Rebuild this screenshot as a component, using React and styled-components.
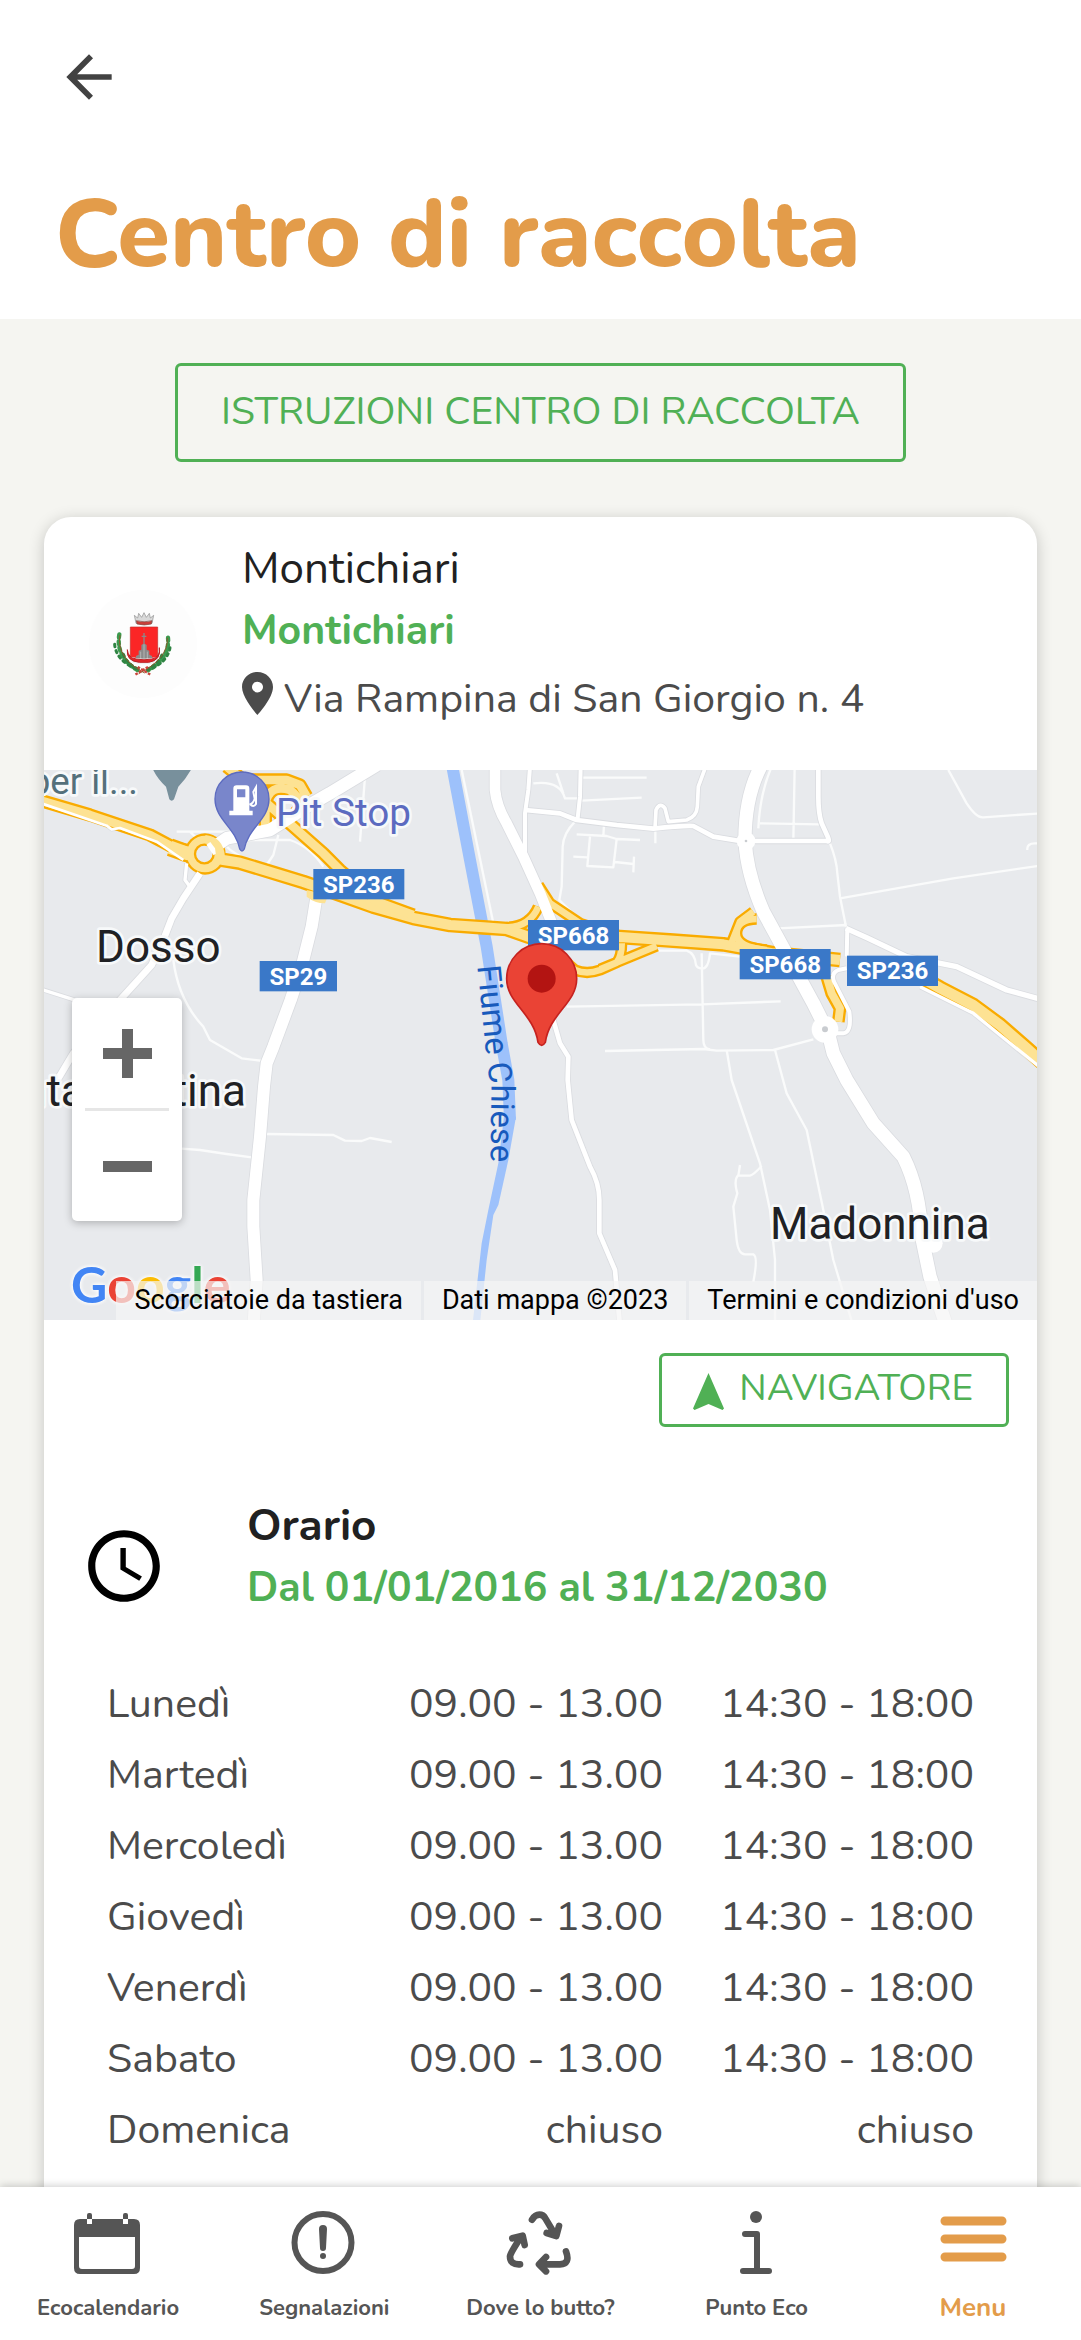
import React from "react";
import styled, { createGlobalStyle } from "styled-components";

const GREEN = "#50b055";
const ORANGE = "#e39c4a";
const GREY = "#4b4b4b";

const GlobalStyle = createGlobalStyle`
  *, *::before, *::after { box-sizing: border-box; }
  body {
    margin: 0;
    background: #f5f5f1;
    font-family: Nunito, Lato, "Open Sans", sans-serif;
    color: ${GREY};
  }
  button { font-family: inherit; margin: 0; cursor: pointer; }
  svg { display: block; flex: none; }
`;

const Screen = styled.div`
  display: flex;
  flex-direction: column;
  height: 100vh;
`;

const Header = styled.header`
  flex: none;
  padding: 43px 55px 24px;
  background: #fff;
`;

const BackButton = styled.button`
  display: block;
  padding: 0;
  border: 0;
  background: none;
  color: #424242;
`;

const Title = styled.h1`
  margin: 64px 0 0;
  font-size: 96px;
  line-height: 120px;
  font-weight: 800;
  color: ${ORANGE};
`;

const Content = styled.main`
  flex: 1;
  min-height: 0;
  overflow-y: auto;
  scrollbar-width: none;
  padding: 44px 44px 0;
`;

const OutlineButton = styled.button`
  display: flex;
  align-items: center;
  justify-content: center;
  gap: 15px;
  height: ${(p) => (p.$compact ? 74 : 99)}px;
  padding: ${(p) => (p.$compact ? "0 33px 4px 31px" : "0 43px 3px")};
  border: 3px solid ${GREEN};
  border-radius: 6px;
  background: transparent;
  color: ${GREEN};
  font-size: ${(p) => (p.$compact ? 37 : 39)}px;
  text-transform: uppercase;

  svg { margin-top: 6px; }
`;

const Centered = styled.div`
  display: flex;
  justify-content: center;
  margin-bottom: 55px;
`;

const Card = styled.section`
  padding-bottom: 60px;
  border-radius: 27px 27px 0 0;
  background: #fff;
  box-shadow: 0 3px 16px rgba(0, 0, 0, 0.2);
`;

const CardHead = styled.div`
  display: flex;
  align-items: center;
  gap: 45px;
  padding-left: 45px;
`;

const Avatar = styled.span`
  width: 108px;
  height: 108px;
  border-radius: 50%;
  background: #fdfdfd;
  overflow: hidden;
`;

const HeadText = styled.div`
  padding: 21px 0 34px;
`;

const Name = styled.p`
  margin: 0;
  font-size: 44px;
  line-height: 62px;
  font-weight: ${(p) => (p.$bold ? 700 : 400)};
  color: #212121;
`;

const Detail = styled.p`
  margin: 0;
  font-size: 41px;
  line-height: 62px;
  font-weight: 700;
  color: ${GREEN};
`;

const Address = styled.address`
  display: flex;
  align-items: center;
  gap: 11px;
  font-size: 41px;
  line-height: 74px;
  font-style: normal;

  svg { margin-bottom: 11px; }
`;

const MapBox = styled.div`
  position: relative;
  height: 550px;
  overflow: hidden;
  background: #e8eaed;
  font-family: Roboto, sans-serif;
`;

const MapLabel = styled.text`
  font-family: Roboto, sans-serif;
  font-size: ${(p) => p.$size}px;
  fill: ${(p) => p.$color};
  stroke: #f7f9fa;
  stroke-width: 16px;
  stroke-linejoin: round;
  paint-order: stroke;
`;

const ShieldLabel = styled.text`
  font-family: Roboto, sans-serif;
  font-size: 72px;
  font-weight: 700;
  fill: #fff;
  text-anchor: middle;
`;

const RiverLabel = styled.text`
  font-family: Roboto, sans-serif;
  font-size: 98px;
  fill: #185abc;
`;

const ZoomControl = styled.div`
  position: absolute;
  left: 28px;
  top: 228px;
  width: 110px;
  padding: 0 13px;
  border-radius: 5px;
  background: #fff;
  box-shadow: 0 2px 8px rgba(0, 0, 0, 0.25);
`;

const ZoomButton = styled.button`
  display: flex;
  align-items: center;
  justify-content: center;
  width: 100%;
  height: 110px;
  padding: 0;
  border: 0;
  background: none;
  color: #666;

  & + & { height: 113px; border-top: 3px solid #e6e6e6; }
`;

const GoogleLogo = styled.a`
  position: absolute;
  left: 27px;
  bottom: 6px;
  display: flex;
  font-family: Lato, sans-serif;
  font-size: 50px;
  line-height: 60px;
  font-weight: 700;
  text-decoration: none;
  text-shadow: 0 0 4px #fff, 0 0 4px #fff;
`;

const LogoLetter = styled.span`
  color: ${(p) => p.$color};
`;

const Attribution = styled.div`
  position: absolute;
  right: 0;
  bottom: 0;
  display: flex;
  gap: 3px;
`;

const attributionItem = `
  height: 39px;
  padding: 0 18px;
  border: 0;
  background: rgba(245, 245, 245, 0.7);
  color: #000;
  font-family: Roboto, sans-serif;
  font-size: 27px;
  line-height: 39px;
  text-decoration: none;
  white-space: nowrap;
`;
const AttributionButton = styled.button`${attributionItem}`;
const AttributionText = styled.span`${attributionItem}`;
const AttributionLink = styled.a`${attributionItem}`;

const Actions = styled.div`
  display: flex;
  justify-content: flex-end;
  padding: 33px 28px 0;
`;

const HoursHead = styled.div`
  display: flex;
  align-items: center;
  gap: 80px;
  padding: 68px 0 0 37px;
  color: #000;
`;

const HoursText = styled.div`
  padding-bottom: 17px;
`;

const HoursTable = styled.table`
  width: calc(100% - 126px);
  margin: 32px 63px 0;
  border-collapse: collapse;
  font-size: 41px;
  line-height: 71px;
`;

const Day = styled.th`
  padding: 0;
  font-weight: 400;
  text-align: left;
`;

const Slot = styled.td`
  width: ${(p) => (p.$last ? "311px" : "auto")};
  padding: 0;
  text-align: right;
`;

const TabBar = styled.nav`
  position: relative;
  flex: none;
  display: grid;
  grid-template-columns: repeat(5, 1fr);
  height: 153px;
  padding-top: 24px;
  background: #fff;
  box-shadow: 0 -1px 8px rgba(0, 0, 0, 0.2);
`;

const Tab = styled.a`
  display: flex;
  flex-direction: column;
  align-items: center;
  gap: 20px;
  color: ${(p) => (p.$active ? ORANGE : "#555")};
  font-size: ${(p) => (p.$active ? 26 : 22)}px;
  line-height: 26px;
  font-weight: 700;
  text-decoration: none;
  white-space: nowrap;
`;

const BackIcon = () => (
  <svg width="68" height="68" viewBox="0 0 24 24" fill="currentColor" aria-hidden="true">
    <path d="M20 11H7.83l5.59-5.59L12 4l-8 8 8 8 1.41-1.41L7.83 13H20v-2z" />
  </svg>
);

const PinIcon = () => (
  <svg width="31" height="43" viewBox="5 2 14 20" preserveAspectRatio="none" fill={GREY} aria-hidden="true">
    <path d="M12 2C8.13 2 5 5.13 5 9c0 5.25 7 13 7 13s7-7.75 7-13c0-3.87-3.13-7-7-7zm0 9.5a2.5 2.5 0 0 1 0-5 2.5 2.5 0 0 1 0 5z" />
  </svg>
);

const NavigateIcon = () => (
  <svg width="31" height="37" viewBox="0 0 31 37" fill="currentColor" aria-hidden="true">
    <path d="M15.500 0 31 35.500 29.500 37 15.500 31 1.500 37 0 35.500z" />
  </svg>
);

const ClockIcon = () => (
  <svg width="86" height="86" viewBox="0 0 24 24" fill="currentColor" aria-hidden="true">
    <path d="M11.990 2C6.470 2 2 6.480 2 12s4.470 10 9.990 10C17.520 22 22 17.520 22 12S17.520 2 11.990 2zM12 20c-4.420 0-8-3.580-8-8s3.580-8 8-8 8 3.580 8 8-3.580 8-8 8zm.5-13H11v6l5.250 3.150.75-1.230-4.500-2.670z" />
  </svg>
);

const CrestIcon = () => (
  <svg width="108" height="108" viewBox="-3 -3 324 324" role="img" aria-label="Stemma di Montichiari">
    <g fill="none" stroke="#3c9a4e" strokeWidth="13" strokeLinecap="round" strokeDasharray="9 11">
      <path d="M88 130q-12 70 56 108" />
      <path d="M234 140q6 62-60 98" />
    </g>
    <g fill="none" stroke="#2f8443" strokeWidth="9" strokeLinecap="round" strokeDasharray="7 12">
      <path d="M74 160q4 50 70 76" />
      <path d="M240 170q-8 46-66 66" />
      <path d="M100 190q14 34 50 46" />
      <path d="M216 192q-14 30-44 42" />
    </g>
    <g fill="none" stroke="#8a5a2c" strokeWidth="3">
      <path d="M90 132q-12 70 74 114" />
      <path d="M232 140q4 62-86 108" />
    </g>
    <path d="M143 228l40 24M174 228l-40 24" stroke="#c9453b" strokeWidth="7" strokeDasharray="8 4" fill="none" />
    <path d="M138 97l-5-24 10 8 3-14 9 12 7-14 7 14 9-12 3 14 10-8-5 24z" fill="#d9d9d9" stroke="#8e8e8e" strokeWidth="2" />
    <path d="M139 89q24 7 47 0l-2 10q-21 6-43 0z" fill="#c8403a" stroke="#7e4b44" strokeWidth="2" />
    <path d="M121 108h82v92h-82z" fill="#fb2626" stroke="#c2302c" strokeWidth="2" />
    <path d="M160 126h4v8h5v4h-5v20l6 4v14l8 3v12l8 4v12h-48v-12l8-4v-12l8-3v-14l6-4v-20h-5v-4h5z" fill="#8b8b8b" />
    <path d="M152 182v24M162 160v46M172 182v24" stroke="#c9c9c9" strokeWidth="2" />
    <path d="M116 196q46 14 92 0l-12 18q-34 12-68 0z" fill="#eee" />
    <path d="M112 176q-4 34 36 38h28q38-6 32-44q4 28-22 34q-24 5-48 0q-24-4-26-28z" fill="#e0262a" stroke="#bd2226" strokeWidth="3" />
  </svg>
);

/* Main roads of the map: yellow with an orange edge. */
const highways = [
  { w: 26, d: "M-20 115L150 165 330 225 400 262 490 285" },
  { w: 40, d: "M390 262L440 280 490 285" },
  { w: 30, d: "M500 290L550 300 600 308 790 366 860 390 1000 440 1120 474 1230 495 1330 502 1400 507 1465 530 1600 545 1740 531 1900 542 2050 553 2200 580 2400 600" },
  { w: 26, d: "M560 20L610 60 740 60 780 75 800 110M676 200V130Q690 70 750 90Q800 130 765 160M680 130L850 280 900 330 1010 425 1120 465" },
  { w: 20, d: "M1400 502Q1470 500 1495 440M1495 375L1530 430 1620 490 1740 528" },
  { w: 20, d: "M1480 530L1560 590 1605 630Q1640 645 1680 630L1730 608Q1745 590 1745 550M1680 628L1850 558" },
  { w: 20, d: "M2140 455L2100 485 2075 548M2150 477Q2090 478 2090 520T2180 570" },
  { w: 24, d: "M2360 650L2375 700 2400 745 2395 785" },
  { w: 32, d: "M2640 650L2700 684 2800 736 2880 795 2960 865 3010 910" },
];

const roads = [
  { w: 38, d: "M510 270L560 235 690 210 800 140 870 100 1010 15" },
  { w: 20, d: "M480 340L430 415 395 475 370 540 335 615 240 720 100 880 40 980" },
  { w: 36, d: "M828 420L815 500 785 620 752 720 700 860 680 910 672 980 660 1130 640 1320 640 1400 650 1560 640 1700" },
  { w: 32, d: "M1365 20L1365 90Q1370 140 1400 190L1450 290 1500 400 1540 500" },
  { w: 14, d: "M1540 780L1560 850 1585 890 1583 960 1595 1080 1650 1220Q1678 1270 1678 1320V1420L1725 1530 1740 1700" },
  { w: 40, d: "M2162 20Q2115 110 2115 240Q2120 340 2170 455L2200 510 2260 620 2320 730 2365 820 2380 880 2420 960 2500 1090 2590 1190Q2640 1290 2645 1430L2670 1550 2720 1700" },
  { w: 14, d: "M1455 150L1560 160 1610 180 1730 195 1840 206Q1930 196 1960 198L2020 230 2100 243H2360Q2370 248 2364 232L2345 190Q2335 160 2335 110V20" },
  { w: 12, d: "M1470 20L1465 90 1455 160 1455 300M1622 20L1620 110 1613 175" },
  { w: 11, d: "M1845 205L1848 150Q1860 125 1875 145L1885 185 1940 180Q1970 170 1972 140L1975 80 1997 20" },
  { w: 16, d: "M2418 505L2480 533 2600 590 2750 620 2900 690 3010 720" },
  { w: 12, d: "M2422 505L2420 590M2420 625L2395 630Q2372 640 2382 665L2428 755Q2436 818 2410 820H2370" },
  { w: 10, d: "M2640 680L2800 760 2880 825 3010 930M10 690L110 722M440 310L435 360 450 380 475 345" },
  { w: 8, d: "M10 132L200 197 215 208 240 204 350 245 430 300" },
];

const lanes = [
  "M400 600Q415 720 490 800L510 840 605 895 670 903",
  "M680 1122L880 1125 915 1142 965 1143 990 1134 1055 1146",
  "M425 1166L480 1170 560 1182 635 1192",
  "M975 50L960 245M410 215H590M450 215L475 240M555 255Q590 295 680 315L700 285 715 225M620 240H750Q810 260 850 320",
  "M1265 30L1360 490",
  "M1625 53H1820M1625 122L1805 113M1480 70Q1560 60 1575 115H1620M1550 40L1570 100",
  "M1605 185Q1570 220 1568 260L1565 380 1558 420 1590 452",
  "M1610 223L1700 228 1730 237 1800 240M1650 230L1642 318 1720 322 1730 237M1600 290L1642 292M1725 306L1780 312M1782 290L1780 337M1692 195L1690 228M1846 205V250",
  "M2264 20L2260 243M2160 190L2340 193M2195 20Q2160 100 2155 205",
  "M2370 250Q2390 300 2392 340L2400 410 2418 500M2200 506L2420 495M2400 415L2740 355 3000 317",
  "M2725 30L2780 130Q2810 175 2830 172L3000 160M2962 270Q2960 250 2985 250H3000",
  "M1740 617L1850 572H1940Q1965 580 1968 615 1972 625 1985 625 2005 628 2010 580L2100 590",
  "M1985 580L1990 840Q1990 866 2010 868M1580 740L1985 733 2222 724",
  "M1695 873L1990 867 2030 872 2200 870 2320 838",
  "M2060 870L2075 960 2160 1210 2190 1350 2205 1500 2205 1700",
  "M2205 870L2240 1000 2300 1110 2350 1350 2380 1500 2440 1700",
  "M2100 1215L2095 1247H2130Q2140 1245 2165 1218M2095 1245Q2080 1260 2092 1300L2080 1340 2090 1440Q2095 1483 2115 1483H2140Q2155 1490 2140 1565",
];

const shields = [
  { x: 820, y: 327, w: 273, t: "SP236" },
  { x: 659, y: 603, w: 232, t: "SP29" },
  { x: 1464, y: 480, w: 273, t: "SP668" },
  { x: 2099, y: 567, w: 273, t: "SP668" },
  { x: 2421, y: 587, w: 273, t: "SP236" },
];

const MapArt = () => (
  <svg width="100%" height="100%" viewBox="12 30 2979 1650" preserveAspectRatio="xMidYMid slice" role="img" aria-label="Mappa">
    <defs>
      <path id="river-line" d="M1312 618L1338 880 1354 1000 1350 1300" />
    </defs>
    <g fill="none" strokeLinejoin="round">
      <path d="M1237 20L1290 300 1340 560 1385 850 1405 960 1410 1080" stroke="#9dc1fb" strokeWidth="36" />
      <path d="M1392 1070L1428 1070 1405 1200 1375 1335 1360 1365 1340 1500 1320 1690H1298L1325 1450 1345 1350 1375 1210z" fill="#9dc1fb" />
      {lanes.map((d) => <path key={d} d={d} stroke="#fafbfb" strokeWidth="7" />)}
      {roads.map((r) => <path key={r.d} d={r.d} stroke="#dadce0" strokeWidth={r.w + 5} />)}
      {highways.map((r) => <path key={r.d} d={r.d} stroke="#f9ab00" strokeWidth={r.w + 14} />)}
      <circle cx="495" cy="282" r="62" fill="#f9ab00" />
      {highways.map((r) => <path key={r.d} d={r.d} stroke="#fde293" strokeWidth={r.w} />)}
      <circle cx="495" cy="282" r="55" fill="#fde293" />
      <circle cx="493" cy="282" r="28" fill="#e8eaed" stroke="#f9ab00" strokeWidth="7" />
      {roads.map((r) => <path key={r.d} d={r.d} stroke="#fff" strokeWidth={r.w} />)}
    </g>
    <path d="M495 225Q550 230 555 290L600 308 570 310 530 300 525 265z" fill="#fde293" />
    <path d="M800 390L865 405 855 430Q825 430 800 410z" fill="#fde293" />
    <g fill="#fff">
      <circle cx="2118" cy="243" r="28" />
      <circle cx="2355" cy="808" r="40" />
      <circle cx="2680" cy="1450" r="28" />
    </g>
    <circle cx="2118" cy="243" r="4" fill="#c9ccd0" />
    <circle cx="2355" cy="808" r="9" fill="#c9ccd0" />
    {shields.map((s) => (
      <g key={s.x}>
        <rect x={s.x} y={s.y} width={s.w} height="91" fill="#3a78c8" />
        <ShieldLabel x={s.x + s.w / 2} y={s.y + 71}>{s.t}</ShieldLabel>
      </g>
    ))}
    <RiverLabel><textPath href="#river-line">Fiume Chiese</textPath></RiverLabel>
    <MapLabel $size={110} $color="#54707b" x="294" y="102" textAnchor="end">per il...</MapLabel>
    <path d="M335 20H458Q440 55 415 80L402 118Q395 126 388 118L378 80Q350 55 335 20z" fill="#78909c" />
    <MapLabel $size={116} $color="#5c6bc0" x="708" y="198">Pit Stop</MapLabel>
    <path d="M606 36a81 81 0 0 0-81 82c0 60 62 85 74 149q7 12 14 0c12-64 74-89 74-149a81 81 0 0 0-81-82z" fill="#7986cb" stroke="#5c6bc0" strokeWidth="4" />
    <path d="M580 152V86q0-10 10-10h28q10 0 10 10v66h10v14h-70v-14zM591 88v24h25V88z" fill="#fff" fillRule="evenodd" />
    <path d="M628 134q12-4 16-18l-4-20 8-14v50q-8 12-18 0" fill="none" stroke="#fff" strokeWidth="6" />
    <MapLabel $size={132} $color="#202124" x="168" y="607">Dosso</MapLabel>
    <MapLabel $size={132} $color="#202124" x="618" y="1037" textAnchor="end">Santa Cristina</MapLabel>
    <MapLabel $size={132} $color="#202124" x="2190" y="1437">Madonnina</MapLabel>
    <path d="M1505 551a105 105 0 0 0-105 106c0 72 82 104 94 190q11 18 22 0c12-86 94-118 94-190a105 105 0 0 0-105-106z" fill="#ea4335" stroke="#c5221f" strokeWidth="5" />
    <circle cx="1505" cy="656" r="42" fill="#b31412" />
  </svg>
);

const PlusIcon = () => (
  <svg width="49" height="49" viewBox="0 0 49 49" fill="currentColor" aria-hidden="true">
    <path d="M19 0h11v19h19v11H30v19H19V30H0V19h19z" />
  </svg>
);

const MinusIcon = () => (
  <svg width="49" height="11" viewBox="0 0 49 11" fill="currentColor" aria-hidden="true">
    <path d="M0 0h49v11H0z" />
  </svg>
);

const TabIcon = ({ children, viewBox = "0 0 68 64" }) => (
  <svg width="68" height="64" viewBox={viewBox} fill="none" stroke="currentColor" strokeLinecap="round" strokeLinejoin="round" aria-hidden="true">
    {children}
  </svg>
);

const tabs = [
  {
    label: "Ecocalendario",
    icon: (
      <TabIcon>
        <path stroke="none" fill="currentColor" fillRule="evenodd" d="M6 8h7v5h5V8h31v5h5V8h6q6 0 6 6v43q0 6-6 6H6q-6 0-6-6V14q0-6 6-6zM5 26v29q0 3 3 3h50q3 0 3-3V26z" />
        <path stroke="none" fill="currentColor" d="M13 8V4q0-2 2-2h1q2 0 2 2v4zM49 8V4q0-2 2-2h1q2 0 2 2v4z" />
      </TabIcon>
    ),
  },
  {
    label: "Segnalazioni",
    icon: (
      <TabIcon>
        <circle cx="33" cy="31.500" r="28.500" strokeWidth="6" />
        <path stroke="none" fill="currentColor" d="M29 18q0-4 4-4t4 4l-1 19q0 3-3 3t-3-3z" />
        <circle cx="33" cy="45" r="3" stroke="none" fill="currentColor" />
      </TabIcon>
    ),
  },
  {
    label: "Dove lo butto?",
    icon: (
      <TabIcon viewBox="18 32 204 192">
        <g strokeWidth="20">
          <path d="M96 58Q105 43 118 43Q130 43 136 54L164 101M177 77L169 107 140 98" />
          <path d="M60 192Q30 194 30 168Q31 158 64 108M37 114L68 106 74 134" />
          <path d="M198 153Q212 191 180 192H118M138 170L117 192 138 213" />
        </g>
        <path stroke="none" fill="currentColor" d="M140 98l37-21-8 30zM37 114l31-8 6 28zM138 170l-21 22 21 21z" />
      </TabIcon>
    ),
  },
  {
    label: "Punto Eco",
    icon: (
      <TabIcon>
        <circle cx="33" cy="6" r="6" stroke="none" fill="currentColor" />
        <path strokeWidth="6" d="M22 23H34V60M20 60H46" />
      </TabIcon>
    ),
  },
  {
    label: "Menu",
    active: true,
    icon: (
      <TabIcon>
        <path strokeWidth="9" d="M6 10H63M6 28H63M6 46H63" />
      </TabIcon>
    ),
  },
];

const hours = [
  ["Lunedì", "09.00 - 13.00", "14:30 - 18:00"],
  ["Martedì", "09.00 - 13.00", "14:30 - 18:00"],
  ["Mercoledì", "09.00 - 13.00", "14:30 - 18:00"],
  ["Giovedì", "09.00 - 13.00", "14:30 - 18:00"],
  ["Venerdì", "09.00 - 13.00", "14:30 - 18:00"],
  ["Sabato", "09.00 - 13.00", "14:30 - 18:00"],
  ["Domenica", "chiuso", "chiuso"],
];

const logo = [
  ["G", "#4285f4"],
  ["o", "#ea4335"],
  ["o", "#fbbc04"],
  ["g", "#4285f4"],
  ["l", "#34a853"],
  ["e", "#ea4335"],
];

export default function App() {
  return (
    <Screen>
      <GlobalStyle />
      <Header>
        <BackButton type="button" aria-label="Indietro"><BackIcon /></BackButton>
        <Title>Centro di raccolta</Title>
      </Header>
      <Content>
        <Centered>
          <OutlineButton type="button">Istruzioni centro di raccolta</OutlineButton>
        </Centered>
        <Card>
          <CardHead>
            <Avatar><CrestIcon /></Avatar>
            <HeadText>
              <Name>Montichiari</Name>
              <Detail>Montichiari</Detail>
              <Address><PinIcon />Via Rampina di San Giorgio n. 4</Address>
            </HeadText>
          </CardHead>
          <MapBox>
            <MapArt />
            <ZoomControl>
              <ZoomButton type="button" aria-label="Zoom avanti"><PlusIcon /></ZoomButton>
              <ZoomButton type="button" aria-label="Zoom indietro"><MinusIcon /></ZoomButton>
            </ZoomControl>
            <GoogleLogo href="#google">
              {logo.map(([letter, color], i) => <LogoLetter key={i} $color={color}>{letter}</LogoLetter>)}
            </GoogleLogo>
            <Attribution>
              <AttributionButton type="button">Scorciatoie da tastiera</AttributionButton>
              <AttributionText>Dati mappa ©2023</AttributionText>
              <AttributionLink href="#termini">Termini e condizioni d'uso</AttributionLink>
            </Attribution>
          </MapBox>
          <Actions>
            <OutlineButton type="button" $compact><NavigateIcon />Navigatore</OutlineButton>
          </Actions>
          <HoursHead>
            <ClockIcon />
            <HoursText>
              <Name $bold>Orario</Name>
              <Detail>Dal 01/01/2016 al 31/12/2030</Detail>
            </HoursText>
          </HoursHead>
          <HoursTable>
            <tbody>
              {hours.map(([day, morning, afternoon]) => (
                <tr key={day}>
                  <Day scope="row">{day}</Day>
                  <Slot>{morning}</Slot>
                  <Slot $last>{afternoon}</Slot>
                </tr>
              ))}
            </tbody>
          </HoursTable>
        </Card>
      </Content>
      <TabBar>
        {tabs.map((tab) => (
          <Tab key={tab.label} href="#" $active={tab.active}>
            {tab.icon}
            {tab.label}
          </Tab>
        ))}
      </TabBar>
    </Screen>
  );
}
